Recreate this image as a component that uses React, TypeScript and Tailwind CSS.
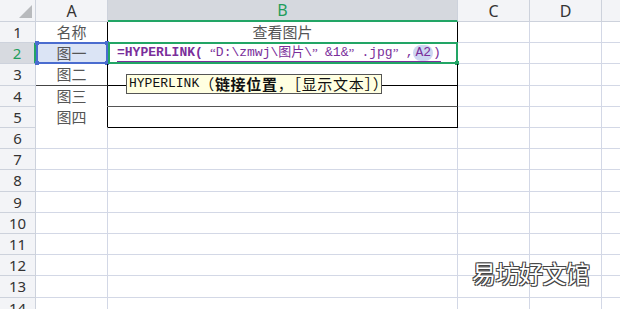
import React from "react";

const rowHeights = [21, 21, 22, 21, 21, 21, 21, 22, 21, 21, 21, 21, 22, 21];
const colA = ["名称", "图一", "图二", "图三", "图四"];

function RowHeader({ n, h }: { n: number; h: number }) {
    const active = n === 2;
    return (
        <div
            style={{ height: h }}
            className={
                active
                    ? "w-[36px] shrink-0 flex items-center justify-center bg-[#d7dae0] text-[#1f9d5c] border-b border-[#cdd2dc] border-r-2 border-r-[#22a565] text-[15px] font-['Noto_Sans',sans-serif]"
                    : "w-[36px] shrink-0 flex items-center justify-center bg-[#f3f4f7] text-[#333] border-b border-r border-[#cdd2dc] text-[15px] font-['Noto_Sans',sans-serif]"
            }
        >
            {n}
        </div>
    );
}

// full-width quote like SimSun draws them
function Q({ c, open }: { c: string; open?: boolean }) {
    return (
        <span
            className={
                open
                    ? "inline-block w-[13px] text-right font-['Liberation_Serif',serif]"
                    : "inline-block w-[13px] text-left font-['Liberation_Serif',serif]"
            }
        >
            {c}
        </span>
    );
}

function Formula() {
    return (
        <div className="flex items-center h-[17px] box-border text-[#7a2e9a] border-b border-[#7a2e9a] font-['Liberation_Mono','Noto_Sans_CJK_SC',monospace] text-[13px] leading-[16px] whitespace-nowrap">
            <b>=HYPERLINK(</b>
            <Q c="“" open />
            <span>D:\zmwj\图片\</span>
            <Q c="”" />
            <span>&amp;1&amp;</span>
            <Q c="”" />
            <span>.jpg</span>
            <Q c="”" />
            <span>,</span>
            <span className="bg-[#cdd6f1] rounded-full px-[2px]">A2</span>
            <span>)</span>
        </div>
    );
}

export default function App() {
    return (
        <div className="relative w-[620px] h-[309px] overflow-hidden bg-white font-['Noto_Sans_CJK_SC',sans-serif] text-[#333]">
            {/* column headers */}
            <div className="flex h-[22px]">
                <div className="w-[36px] shrink-0 relative bg-[#f3f4f7] border-r border-b border-[#cdd2dc]">
                    <div className="absolute right-[3px] bottom-[3px] w-0 h-0 border-l-[13px] border-l-transparent border-b-[13px] border-b-[#b8babd]" />
                </div>
                <div className="w-[72px] shrink-0 flex items-center justify-center bg-[#f3f4f7] border-r border-b border-[#cdd2dc] text-[16px] font-['Noto_Sans',sans-serif]">A</div>
                <div className="w-[350px] shrink-0 flex items-center justify-center bg-[#d5d8de] border-r border-[#cdd2dc] border-b-2 border-b-[#22a565] text-[16px] text-[#1f9d5c] font-['Noto_Sans',sans-serif]">B</div>
                <div className="w-[72px] shrink-0 flex items-center justify-center bg-[#f3f4f7] border-r border-b border-[#cdd2dc] text-[16px] font-['Noto_Sans',sans-serif]">C</div>
                <div className="w-[72px] shrink-0 flex items-center justify-center bg-[#f3f4f7] border-r border-b border-[#cdd2dc] text-[16px] font-['Noto_Sans',sans-serif]">D</div>
                <div className="flex-1 bg-[#f3f4f7] border-b border-[#cdd2dc]" />
            </div>

            {rowHeights.map((h, i) => {
                const n = i + 1;
                const inTable = n <= 5;
                return (
                    <div key={n} className="flex" style={{ height: h }}>
                        <RowHeader n={n} h={h} />
                        {/* column A */}
                        <div
                            className={
                                "relative w-[72px] shrink-0 flex items-center justify-center text-[15px] text-[#555] border-r border-b " +
                                (inTable
                                    ? n === 3
                                        ? "border-r-black border-b-[#444]"
                                        : n === 2
                                        ? "border-r-black border-b-white bg-[#dbe4f5]"
                                        : "border-r-black border-b-white"
                                    : "border-[#d3d8e6]")
                            }
                        >
                            {inTable ? colA[i] : ""}
                            {n === 2 && (
                                <div className="absolute left-0 right-[-1px] top-[-1px] bottom-[-1px] border-2 border-[#4a6ccf]">
                                    <div className="absolute -left-[3px] -top-[3px] w-[4px] h-[4px] bg-[#4a6ccf]" />
                                    <div className="absolute -right-[3px] -top-[3px] w-[4px] h-[4px] bg-[#4a6ccf]" />
                                    <div className="absolute -left-[3px] -bottom-[3px] w-[4px] h-[4px] bg-[#4a6ccf]" />
                                    <div className="absolute -right-[3px] -bottom-[3px] w-[4px] h-[4px] bg-[#4a6ccf]" />
                                </div>
                            )}
                        </div>
                        {/* column B */}
                        <div
                            className={
                                "relative w-[350px] shrink-0 flex items-center border-r border-b text-[15px] text-[#555] " +
                                (inTable
                                    ? n === 4
                                        ? "border-black border-b-[#555]"
                                        : "border-black"
                                    : "border-[#d3d8e6]") +
                                (n === 1 ? " justify-center" : " justify-start pl-[9px]")
                            }
                        >
                            {n === 1 && "查看图片"}
                            {n === 2 && (
                                <>
                                    <Formula />
                                    <div className="absolute left-0 right-[-1px] top-[-1px] bottom-[-1px] border-2 border-[#22a565]">
                                        <div className="absolute -right-[3px] -bottom-[3px] w-[4px] h-[4px] bg-[#22a565]" />
                                    </div>
                                </>
                            )}
                            {n === 3 && (
                                <div className="absolute left-[18px] top-[10px] w-[256px] h-[20px] z-10 bg-[#ffffe1] border border-[#555] flex items-center pl-[2px] whitespace-nowrap text-[13px] text-[#111] font-['Liberation_Mono','Noto_Sans_CJK_SC',monospace]">
                                    HYPERLINK
                                    <span className="text-[15px] tracking-[0.7px] font-['Noto_Sans_CJK_SC',sans-serif]">
                                        （<b>链接位置</b>，［显示文本］）
                                    </span>
                                </div>
                            )}
                        </div>
                        <div className="w-[72px] shrink-0 border-r border-b border-[#d3d8e6]" />
                        <div className="w-[72px] shrink-0 border-r border-b border-[#d3d8e6]" />
                        <div className="flex-1 border-b border-[#d3d8e6]" />
                    </div>
                );
            })}

            {/* watermark */}
            <div className="absolute left-[472px] top-[261px] text-[24px] leading-none text-white tracking-[-0.5px] [text-shadow:-1px_-1px_0_#444,1px_-1px_0_#444,-1px_1px_0_#444,1px_1px_0_#444]">
                易坊好文馆
            </div>
        </div>
    );
}
